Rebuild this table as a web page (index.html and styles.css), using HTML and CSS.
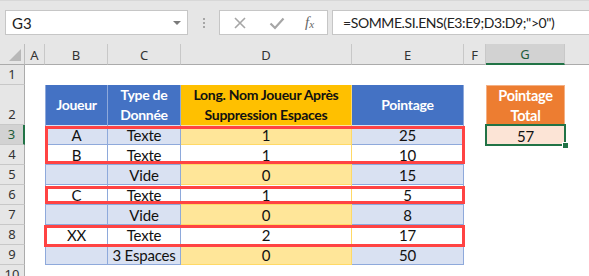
FILE: index.html
```html
<!DOCTYPE html>
<html lang="fr">
<head>
<meta charset="utf-8">
<title>SOMME.SI.ENS</title>
<link rel="stylesheet" href="styles.css">
</head>
<body>
<div class="app">
  <div class="toolbar">
    <div class="namebox"><span class="ref">G3</span><span class="dd"></span></div>
    <div class="dots"><i></i><i></i><i></i></div>
    <div class="iconbox">
      <svg class="ico" width="14" height="14" viewBox="0 0 14 14"><path d="M2 2 L12 12 M12 2 L2 12" stroke="#a6a6a6" stroke-width="1.6" fill="none"/></svg>
      <svg class="ico" width="16" height="14" viewBox="0 0 16 14"><path d="M1.5 7.5 L6 12 L14.5 2.5" stroke="#a6a6a6" stroke-width="2.2" fill="none"/></svg>
      <span class="fx">f<sub>x</sub></span>
    </div>
    <div class="formula">=SOMME.SI.ENS(E3:E9;D3:D9;"&gt;0")</div>
  </div>

  <div class="sheet">
    <!-- column headers -->
    <div class="corner"><span class="tri"></span></div>
    <div class="ch">A</div>
    <div class="ch">B</div>
    <div class="ch">C</div>
    <div class="ch">D</div>
    <div class="ch">E</div>
    <div class="ch">F</div>
    <div class="ch sel">G</div>
    <div class="ch last"></div>

    <!-- row 1 -->
    <div class="rh">1</div>
    <div class="c"></div><div class="c"></div><div class="c"></div><div class="c"></div><div class="c"></div><div class="c"></div><div class="c"></div><div class="c"></div>

    <!-- row 2 -->
    <div class="rh tall">2</div>
    <div class="c"></div>
    <div class="hb tl">Joueur</div>
    <div class="hb">Type de<br>Donnée</div>
    <div class="hy">Long. Nom Joueur Après<br>Suppression Espaces</div>
    <div class="hb">Pointage</div>
    <div class="c"></div>
    <div class="ho">Pointage<br>Total</div>
    <div class="c"></div>

    <!-- row 3 -->
    <div class="rh rsel">3</div>
    <div class="c"></div>
    <div class="d bb tl">A</div>
    <div class="d bb">Texte</div>
    <div class="d yb">1</div>
    <div class="d bb">25</div>
    <div class="c"></div>
    <div class="res">57</div>
    <div class="c"></div>

    <!-- row 4 -->
    <div class="rh">4</div>
    <div class="c"></div>
    <div class="d bw tl">B</div>
    <div class="d bw">Texte</div>
    <div class="d yw">1</div>
    <div class="d bw">10</div>
    <div class="c"></div><div class="c"></div><div class="c"></div>

    <!-- row 5 -->
    <div class="rh">5</div>
    <div class="c"></div>
    <div class="d bb tl"></div>
    <div class="d bb">Vide</div>
    <div class="d yb">0</div>
    <div class="d bb">15</div>
    <div class="c"></div><div class="c"></div><div class="c"></div>

    <!-- row 6 -->
    <div class="rh">6</div>
    <div class="c"></div>
    <div class="d bw tl">C</div>
    <div class="d bw">Texte</div>
    <div class="d yw">1</div>
    <div class="d bw">5</div>
    <div class="c"></div><div class="c"></div><div class="c"></div>

    <!-- row 7 -->
    <div class="rh">7</div>
    <div class="c"></div>
    <div class="d bb tl"></div>
    <div class="d bb">Vide</div>
    <div class="d yb">0</div>
    <div class="d bb">8</div>
    <div class="c"></div><div class="c"></div><div class="c"></div>

    <!-- row 8 -->
    <div class="rh">8</div>
    <div class="c"></div>
    <div class="d bw tl">XX</div>
    <div class="d bw">Texte</div>
    <div class="d yw">2</div>
    <div class="d bw">17</div>
    <div class="c"></div><div class="c"></div><div class="c"></div>

    <!-- row 9 -->
    <div class="rh">9</div>
    <div class="c"></div>
    <div class="d bb tl"></div>
    <div class="d bb">3 Espaces</div>
    <div class="d yb">0</div>
    <div class="d bb">50</div>
    <div class="c"></div><div class="c"></div><div class="c"></div>

    <!-- row 10 -->
    <div class="rh">10</div>
    <div class="c"></div><div class="c"></div><div class="c"></div><div class="c"></div><div class="c"></div><div class="c"></div><div class="c"></div><div class="c"></div>

    <!-- overlays -->
    <div class="redbox r1"></div>
    <div class="redbox r2"></div>
    <div class="redbox r3"></div>
    <div class="selbox"><span class="handle"></span></div>
  </div>
</div>
</body>
</html>
```

FILE: styles.css
```css
html, body {
  margin: 0;
  padding: 0;
  background: #ffffff;
  overflow: hidden;
}

.app {
  width: 589px;
  height: 276px;
  overflow: hidden;
  font-family: Lato, "Liberation Sans", sans-serif;
}

/* ---------- formula bar ---------- */
.toolbar {
  height: 44px;
  box-sizing: border-box;
  background: #e6e6e6;
  border-top: 1px solid #d8d8d8;
  display: flex;
  align-items: flex-start;
  padding-top: 9px;
  padding-left: 5px;
}

.namebox {
  width: 183px;
  height: 25px;
  box-sizing: border-box;
  background: #ffffff;
  border: 1px solid #c6c6c6;
  display: flex;
  align-items: center;
  justify-content: space-between;
  padding: 0 6px 0 6px;
  font-size: 15px;
  color: #222;
}

.dd {
  width: 0;
  height: 0;
  border-left: 4px solid transparent;
  border-right: 4px solid transparent;
  border-top: 4px solid #7a7a7a;
}

.dots {
  width: 31px;
  height: 25px;
  display: flex;
  flex-direction: column;
  align-items: center;
  justify-content: center;
  gap: 2px;
}
.dots i {
  display: block;
  width: 2px;
  height: 2px;
  background: #a6a6a6;
}

.iconbox {
  width: 109px;
  height: 25px;
  box-sizing: border-box;
  background: #ffffff;
  border: 1px solid #c6c6c6;
  display: flex;
  align-items: center;
  padding-left: 13px;
  gap: 22px;
}

.fx {
  font-family: "Liberation Serif", serif;
  font-style: italic;
  font-size: 15px;
  color: #666;
  margin-left: -2px;
}
.fx sub {
  font-size: 11px;
  vertical-align: -1px;
}

.formula {
  margin-left: 4px;
  flex: 1;
  height: 25px;
  box-sizing: border-box;
  background: #ffffff;
  border: 1px solid #c6c6c6;
  border-right: none;
  padding-left: 10px;
  font-size: 14px;
  letter-spacing: -0.4px;
  line-height: 23px;
  color: #222;
  white-space: nowrap;
}

/* ---------- sheet grid ---------- */
.sheet {
  position: relative;
  display: grid;
  grid-template-columns: 25px 20px 63px 73px 171px 112px 22px 79px 1fr;
  grid-template-rows: 21px 20px 40px repeat(7, 20px) 20px;
  font-size: 15px;
  letter-spacing: -0.2px;
  color: #111;
}

.corner, .ch, .rh {
  background: #e6e6e6;
  box-sizing: border-box;
  font-family: "Noto Sans", "Liberation Sans", sans-serif;
  font-size: 13px;
  letter-spacing: 0;
  color: #333;
}

.corner {
  position: relative;
  border-right: 1px solid #bdbdbd;
  border-bottom: 1px solid #ababab;
}
.tri {
  position: absolute;
  right: 3px;
  bottom: 3px;
  width: 0;
  height: 0;
  border-left: 12px solid transparent;
  border-bottom: 12px solid #b8b8b8;
}

.ch {
  border-right: 1px solid #c8c8c8;
  border-bottom: 1px solid #ababab;
  display: flex;
  align-items: center;
  justify-content: center;
  padding-top: 1px;
}
.ch.last { border-right: none; }
.ch.sel {
  background: #d2d2d2;
  color: #1e5c3a;
  border-bottom: 2px solid #217346;
}

.rh {
  border-right: 1px solid #ababab;
  border-bottom: 1px solid #c8c8c8;
  display: flex;
  align-items: flex-end;
  justify-content: center;
  line-height: 19px;
}
.rh.rsel {
  background: #d2d2d2;
  color: #1e5c3a;
  border-right: 2px solid #217346;
}

.c { background: #ffffff; }

/* table headers */
.hb, .hy, .ho {
  box-sizing: border-box;
  display: flex;
  align-items: center;
  justify-content: center;
  text-align: center;
  font-weight: bold;
  font-size: 14px;
  letter-spacing: -0.3px;
  line-height: 20px;
}
.hb {
  background: #4472c4;
  color: #ffffff;
  border-right: 1px solid #8ea9db;
}
.hb.tl { border-left: 1px solid #8ea9db; }
.hy {
  background: #ffc000;
  color: #111;
  border-right: 1px solid #ffd966;
}
.ho {
  background: #ed7d31;
  color: #ffffff;
  font-size: 14.5px;
  border: 1px solid #f4b084;
  border-bottom: none;
}

/* table data */
.d {
  box-sizing: border-box;
  display: flex;
  align-items: center;
  justify-content: center;
  border-bottom: 1px solid #8ea9db;
  border-right: 1px solid #8ea9db;
  padding-top: 1px;
  white-space: nowrap;
}
.d.tl { border-left: 1px solid #8ea9db; }
.bb { background: #d9e1f2; }
.bw { background: #ffffff; }
.yb { background: #ffe699; border-bottom-color: #ffd966; border-right-color: #ffd966; }
.yw { background: #ffffff; border-bottom-color: #ffd966; border-right-color: #ffd966; }

.res {
  background: #fce4d6;
  display: flex;
  align-items: center;
  justify-content: center;
  padding-top: 1px;
}

/* ---------- overlays ---------- */
.redbox {
  position: absolute;
  box-sizing: border-box;
  border: 3px solid #ff4343;
}
.r1 { left: 45px; top: 82px; width: 420px; height: 38px; }
.r2 { left: 45px; top: 142px; width: 420px; height: 18px; }
.r3 { left: 44px; top: 181px; width: 421px; height: 22px; }

.selbox {
  position: absolute;
  box-sizing: border-box;
  left: 485px;
  top: 80px;
  width: 81px;
  height: 22px;
  border: 2px solid #217346;
}
.handle {
  position: absolute;
  right: -5px;
  bottom: -5px;
  width: 5px;
  height: 5px;
  background: #217346;
  border: 1px solid #ffffff;
}
```
